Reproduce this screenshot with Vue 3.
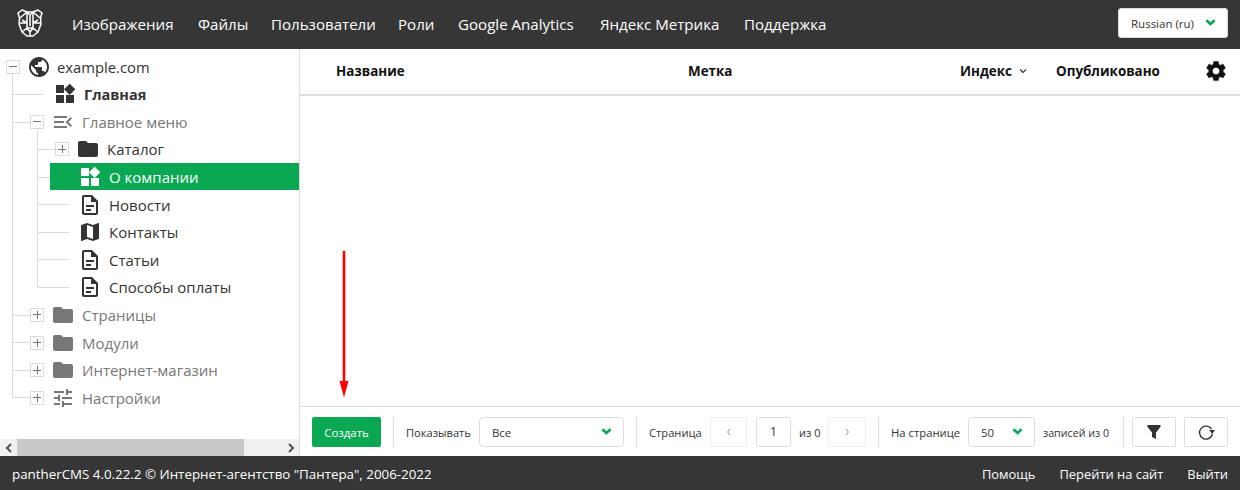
<script setup>
const icons = {
  widgets: 'M13 13v8h8v-8h-8zM3 21h8v-8H3v8zM3 3v8h8V3H3zm13.66-1.31L11 7.34 16.66 13l5.66-5.66-5.66-5.65z',
  globe: 'M12 2C6.48 2 2 6.48 2 12s4.48 10 10 10 10-4.48 10-10S17.52 2 12 2zm-1 17.93c-3.95-.49-7-3.85-7-7.93 0-.62.08-1.21.21-1.79L9 15v1c0 1.1.9 2 2 2v1.93zm6.9-2.54c-.26-.81-1-1.39-1.9-1.39h-1v-3c0-.55-.45-1-1-1H8v-2h2c.55 0 1-.45 1-1V7h2c1.1 0 2-.9 2-2v-.41c2.93 1.19 5 4.06 5 7.41 0 2.08-.8 3.97-2.1 5.39z',
  folder: 'M10 4H4c-1.1 0-1.99.9-1.99 2L2 18c0 1.1.9 2 2 2h16c1.1 0 2-.9 2-2V8c0-1.1-.9-2-2-2h-8l-2-2z',
  doc: 'M14 2H6c-1.1 0-2 .9-2 2v16c0 1.1.9 2 2 2h12c1.1 0 2-.9 2-2V8zm4 18H6V4h7v5h5zM8 12h8v2H8zm0 4h5v2H8z',
  map: 'M20.5 3l-.16.03L15 5.1 9 3 3.36 4.9c-.21.07-.36.25-.36.48V20.5c0 .28.22.5.5.5l.16-.03L9 18.9l6 2.1 5.64-1.9c.21-.07.36-.25.36-.48V3.5c0-.28-.22-.5-.5-.5zM15 19l-6-2.11V5l6 2.11V19z',
  menu: 'M3 18h13v-2H3v2zm0-5h10v-2H3v2zm0-7v2h13V6H3zm18 9.59L17.42 12 21 8.41 19.59 7l-5 5 5 5L21 15.59z',
  tune: 'M3 17v2h6v-2H3zM3 5v2h10V5H3zm10 16v-2h8v-2h-8v-2h-2v6h2zM7 9v2H3v2h4v2h2V9H7zm14 4v-2H11v2h10zm-6-4h2V7h4V5h-4V3h-2v6z',
  gear: 'M19.14 12.94c.04-.3.06-.61.06-.94 0-.32-.02-.64-.07-.94l2.03-1.58c.18-.14.23-.41.12-.61l-1.92-3.32c-.12-.22-.37-.29-.59-.22l-2.39.96c-.5-.38-1.03-.7-1.62-.94l-.36-2.54c-.04-.24-.24-.41-.48-.41h-3.84c-.24 0-.43.17-.47.41l-.36 2.54c-.59.24-1.13.57-1.62.94l-2.39-.96c-.22-.08-.47 0-.59.22L2.74 8.87c-.12.21-.08.47.12.61l2.03 1.58c-.05.3-.09.63-.09.94s.02.64.07.94l-2.03 1.58c-.18.14-.23.41-.12.61l1.92 3.32c.12.22.37.29.59.22l2.39-.96c.5.38 1.03.7 1.62.94l.36 2.54c.05.24.24.41.48.41h3.84c.24 0 .44-.17.47-.41l.36-2.54c.59-.24 1.13-.56 1.62-.94l2.39.96c.22.08.47 0 .59-.22l1.92-3.32c.12-.22.07-.47-.12-.61l-2.01-1.58zM12 15.6c-1.98 0-3.6-1.62-3.6-3.6s1.62-3.6 3.6-3.6 3.6 1.62 3.6 3.6-1.62 3.6-3.6 3.6z',
  filter: 'M4.200 3.600H19.800V6L14.400 12.600V20.400L9.600 18V12.600L4.200 6Z'
}
const menu = [
  { label: 'Изображения', w: 126 },
  { label: 'Файлы', w: 73 },
  { label: 'Пользователи', w: 127 },
  { label: 'Роли', w: 60 },
  { label: 'Google Analytics', w: 142 },
  { label: 'Яндекс Метрика', w: 144 },
  { label: 'Поддержка', w: 84 }
]
const children = [
  { icon: 'doc', label: 'Новости' },
  { icon: 'map', label: 'Контакты' },
  { icon: 'doc', label: 'Статьи' },
  { icon: 'doc', label: 'Способы оплаты' }
]
const sections = [
  { icon: 'folder', label: 'Страницы' },
  { icon: 'folder', label: 'Модули' },
  { icon: 'folder', label: 'Интернет-магазин' },
  { icon: 'tune', label: 'Настройки' }
]
</script>

<template>
  <div class="app">
    <header class="topbar">
      <svg class="logo" viewBox="0 0 26 28" fill="none" stroke="#fff" stroke-width="1.5" stroke-linejoin="round">
        <path d="M5 1 L10 3 H16 L21 1 L25 4 L23.5 9 L24 15 L21 23 L16 27 H10 L5 23 L2 15 L2.500 9 L1 4 Z" />
        <path d="M3 9 L10 3 V14 L5 11 M23 9 L16 3 V14 L21 11 M10 3 L13 6 L16 3 M13 6 V17 M2.500 14 L10 14 L10 19 L5 23 M23.500 14 L16 14 L16 19 L21 23 M10 19 H16 L13 23 Z M13 23 V27" />
      </svg>
      <nav class="nav">
        <span v-for="item in menu" :key="item.label" :style="{ width: item.w + 'px' }">{{ item.label }}</span>
      </nav>
      <div class="lang">
        <span>Russian (ru)</span>
        <svg class="chev" viewBox="0 0 12 8"><path d="M1.500 1 L6 5 L10.500 1" /></svg>
      </div>
    </header>

    <div class="body">
      <aside class="side">
        <div class="tree">
          <div class="row root">
            <span class="box minus"></span>
            <svg class="ic globe" viewBox="0 0 24 24"><path :d="icons.globe" /></svg>
            <span class="lbl">example.com</span>
          </div>
          <ul class="l1">
            <li class="row home">
              <svg class="ic" viewBox="0 0 24 24"><path :d="icons.widgets" /></svg>
              <span class="lbl strong">Главная</span>
            </li>
            <li>
              <div class="row sec">
                <span class="box minus"></span>
                <svg class="ic grey" viewBox="0 0 24 24"><path :d="icons.menu" /></svg>
                <span class="lbl grey">Главное меню</span>
              </div>
              <ul class="l2">
                <li class="row cat">
                  <span class="box plus"></span>
                  <svg class="ic" viewBox="0 0 24 24"><path :d="icons.folder" /></svg>
                  <span class="lbl">Каталог</span>
                </li>
                <li class="row active">
                  <svg class="ic white" viewBox="0 0 24 24"><path :d="icons.widgets" /></svg>
                  <span class="lbl">О компании</span>
                </li>
                <li v-for="c in children" :key="c.label" class="row leaf">
                  <svg class="ic" viewBox="0 0 24 24"><path :d="icons[c.icon]" /></svg>
                  <span class="lbl">{{ c.label }}</span>
                </li>
              </ul>
            </li>
            <li v-for="s in sections" :key="s.label" class="row sec">
              <span class="box plus"></span>
              <svg class="ic grey" viewBox="0 0 24 24"><path :d="icons[s.icon]" /></svg>
              <span class="lbl grey">{{ s.label }}</span>
            </li>
          </ul>
        </div>
        <div class="hscroll">
          <span class="arrow">
            <svg viewBox="0 0 8 10"><path d="M6 1 L2 5 L6 9" /></svg>
          </span>
          <span class="track"><span class="thumb"></span></span>
          <span class="arrow">
            <svg viewBox="0 0 8 10"><path d="M2 1 L6 5 L2 9" /></svg>
          </span>
        </div>
      </aside>

      <main class="main">
        <div class="thead">
          <span class="th t-name">Название</span>
          <span class="th t-mark">Метка</span>
          <span class="th t-index">Индекс
            <svg class="small-chev" viewBox="0 0 8 6"><path d="M1 1.500 L4 4.500 L7 1.500" /></svg>
          </span>
          <span class="th t-pub">Опубликовано</span>
          <svg class="gear" viewBox="0 0 24 24"><path :d="icons.gear" /></svg>
        </div>
        <div class="tbody"></div>
        <div class="pager">
          <button class="create">Создать</button>
          <span class="div"></span>
          <span class="cap show">Показывать</span>
          <div class="select s-all">
            <span>Все</span>
            <svg class="chev" viewBox="0 0 12 8"><path d="M1.500 1 L6 5 L10.500 1" /></svg>
          </div>
          <span class="div"></span>
          <span class="cap c-page">Страница</span>
          <span class="pg">
            <svg viewBox="0 0 6 8"><path d="M4 1 L1.500 4 L4 7" /></svg>
          </span>
          <span class="pg num">1</span>
          <span class="cap c-of">из 0</span>
          <span class="pg next">
            <svg viewBox="0 0 6 8"><path d="M2 1 L4.500 4 L2 7" /></svg>
          </span>
          <span class="div"></span>
          <span class="cap c-per">На странице</span>
          <div class="select s-num">
            <span>50</span>
            <svg class="chev" viewBox="0 0 12 8"><path d="M1.500 1 L6 5 L10.500 1" /></svg>
          </div>
          <span class="cap narrow">записей из 0</span>
          <span class="div"></span>
          <span class="tool"><svg viewBox="0 0 24 24"><path :d="icons.filter" /></svg></span>
          <span class="tool">
            <svg viewBox="0 0 20 20">
              <path class="ring" d="M16.400 12 A6.500 6.500 0 1 1 15.600 7.200" />
              <path d="M13.200 8 H19 L16.100 12 Z" />
            </svg>
          </span>
        </div>
        <svg class="red-arrow" viewBox="0 0 12 148" fill="#f00">
          <rect x="4.700" y="0" width="2.600" height="132" />
          <path d="M1.500 130 H10.500 L6 146.500 Z" />
        </svg>
      </main>
    </div>

    <footer class="footer">
      <span class="copy">pantherCMS 4.0.22.2 © Интернет-агентство "Пантера", 2006-2022</span>
      <nav class="foot-nav">
        <span>Помощь</span>
        <span>Перейти на сайт</span>
        <span>Выйти</span>
      </nav>
    </footer>
  </div>
</template>

<style>
html, body { margin: 0; padding: 0; background: #fff; overflow: hidden; }
</style>

<style scoped>
.app {
  width: 1240px;
  height: 490px;
  display: flex;
  flex-direction: column;
  font-family: "Open Sans", "Liberation Sans", sans-serif;
  color: #333;
  overflow: hidden;
}

/* top bar */
.topbar {
  height: 49px;
  flex: none;
  background: #363636;
  display: flex;
  align-items: center;
  padding: 0 12px 0 17px;
  box-sizing: border-box;
}
.logo { width: 26px; height: 28px; flex: none; margin-bottom: 3px; }
.nav {
  display: flex;
  margin-left: 29px;
  margin-bottom: 2px;
  color: #fff;
  font-size: 15.100px;
  white-space: nowrap;
}
.lang {
  margin-left: auto;
  width: 110px;
  height: 30px;
  margin-bottom: 3px;
  box-sizing: border-box;
  background: #fff;
  border-radius: 3px;
  border: 1px solid #ddd;
  display: flex;
  align-items: center;
  justify-content: space-between;
  padding: 0 11px 0 12px;
  font-size: 11.500px;
  color: #333;
}
.chev { width: 11px; height: 8px; fill: none; stroke: #0aa853; stroke-width: 3; flex: none; }

/* layout */
.body { flex: 1; display: flex; min-height: 0; }
.side {
  width: 300px;
  flex: none;
  box-sizing: border-box;
  border-right: 1px solid #ddd;
  display: flex;
  flex-direction: column;
}
.tree { flex: 1; padding-top: 3.950px; overflow: hidden; font-size: 15px; }
ul { list-style: none; margin: 0; padding: 0; position: relative; }

.row {
  height: 27.580px;
  display: flex;
  align-items: center;
  position: relative;
  white-space: nowrap;
}
.box {
  width: 14px;
  height: 14px;
  flex: none;
  box-sizing: border-box;
  border: 1px solid #d9d9d9;
  background: #fff;
  position: relative;
  z-index: 1;
}
.box::before {
  content: "";
  position: absolute;
  left: 2px; right: 2px; top: 5.500px;
  height: 1px;
  background: #777;
}
.box.plus::after {
  content: "";
  position: absolute;
  top: 2px; bottom: 2px; left: 5.500px;
  width: 1px;
  background: #777;
}
.ic { flex: none; width: 24px; height: 24px; fill: #333; }
.ic.grey { fill: #777; }
.ic.white { fill: #fff; }
.lbl { color: #333; }
.lbl.grey { color: #777; }
.lbl.strong { font-weight: 700; font-size: 14.500px; }

.root { padding-left: 6px; }
.root .globe { margin-left: 7px; }
.root .lbl { margin-left: 6px; font-size: 14.800px; }

.l1 { margin-left: 12px; }
.l1::before {
  content: "";
  position: absolute;
  left: 0; top: -8px; bottom: 13.800px;
  width: 1px;
  background: #d9d9d9;
}
.l1 > li { position: relative; }
.l1 > .row::before, .l1 > li > .row::before, .l2 > .row::before {
  content: "";
  position: absolute;
  left: 0; top: 13.500px;
  height: 1px;
  background: #d9d9d9;
  width: 18px;
}
.l1 > .home::before { width: 32px; }
.home { padding-left: 41px; }
.home .lbl { margin-left: 7px; }
.sec { padding-left: 18px; }
.sec .ic { margin-left: 7px; }
.sec .lbl { margin-left: 7px; }

.l2 { margin-left: 25px; }
.l2::before {
  content: "";
  position: absolute;
  left: 0; top: -6px; bottom: 13.800px;
  width: 1px;
  background: #d9d9d9;
}
.cat { padding-left: 18px; }
.cat .ic { margin-left: 7px; }
.cat .lbl { margin-left: 7px; }
.l2 > .active {
  background: #0aa853;
  height: 27px;
  margin: 0 0 0.580px 13px;
  padding-left: 28px;
}
.l2 > .active::before { left: -13px; width: 13px; }
.active .lbl { color: #fff; margin-left: 7px; }
.leaf { padding-left: 41px; }
.l2 > .leaf::before { width: 32px; }
.leaf .lbl { margin-left: 7px; }

.hscroll {
  height: 17px;
  flex: none;
  display: flex;
  background: #f1f1f1;
}
.arrow {
  width: 17px;
  flex: none;
  display: flex;
  align-items: center;
  justify-content: center;
}
.arrow svg { width: 8px; height: 10px; fill: none; stroke: #505050; stroke-width: 2; }
.track { flex: 1; display: block; }
.thumb { display: block; width: 227px; height: 100%; background: #c8c8c8; }

/* main */
.main { flex: 1; display: flex; flex-direction: column; position: relative; min-width: 0; }
.thead {
  height: 47px;
  flex: none;
  box-sizing: border-box;
  border-bottom: 2px solid #ddd;
  padding-bottom: 2px;
  display: flex;
  align-items: center;
  font-size: 13.400px;
  font-weight: 700;
  color: #111;
  padding-left: 36px;
}
.th { white-space: nowrap; }
.t-name { width: 352px; }
.t-mark { width: 272px; }
.t-index { width: 96px; display: flex; align-items: center; gap: 7px; }
.small-chev { width: 8px; height: 6px; fill: none; stroke: #333; stroke-width: 1.200; }
.t-pub { width: 150px; margin-right: -2px; }
.gear { width: 24px; height: 24px; fill: #111; stroke: #111; stroke-width: 0.500; flex: none; }
.tbody { flex: 1; }

.pager {
  height: 50px;
  flex: none;
  box-sizing: border-box;
  border-top: 1px solid #ddd;
  display: flex;
  align-items: center;
  padding-left: 12px;
  font-size: 11.400px;
  color: #333;
  white-space: nowrap;
}
.create {
  width: 69px;
  height: 30px;
  flex: none;
  border: 0;
  border-radius: 2px;
  background: #0aa853;
  color: #fff;
  font: inherit;
  padding: 2px 0 0;
}
.div { width: 1px; height: 30px; background: #ddd; flex: none; margin: 0 12px; }
.cap { flex: none; padding-top: 2px; }
.cap.show { width: 65px; font-size: 11.100px; }
.cap.c-page { width: 53px; font-size: 11.200px; }
.cap.c-of { width: 21px; font-size: 11px; }
.cap.c-per { width: 69px; font-size: 11.300px; }
.cap.narrow { width: 68px; font-size: 10.700px; }
.select {
  height: 30px;
  box-sizing: border-box;
  border: 1px solid #ddd;
  border-radius: 4px;
  display: flex;
  align-items: center;
  justify-content: space-between;
  padding: 0 11px 0 12px;
  flex: none;
}
.select > span { padding-top: 2px; }
.s-all { width: 145px; margin-left: 8px; }
.s-num { width: 67px; margin: 0 8px; }
.pg {
  height: 30px;
  width: 37px;
  box-sizing: border-box;
  border: 1px solid #eee;
  border-radius: 2px;
  display: flex;
  align-items: center;
  justify-content: center;
  margin: 0 8px;
  flex: none;
}
.pg svg { width: 6px; height: 8px; fill: none; stroke: #888; stroke-width: 0.900; }
.pg.num { width: 35px; border-color: #ddd; font-size: 12px; margin-left: 1px; }
.pg.next { width: 38px; margin-right: 0; }
.tool {
  width: 44px;
  height: 30px;
  box-sizing: border-box;
  border: 1px solid #ddd;
  border-radius: 2px;
  display: flex;
  align-items: center;
  justify-content: center;
  margin-right: 8px;
  flex: none;
}
.div + .tool { margin-left: -4px; }
.tool svg { width: 20px; height: 20px; fill: #333; }
.tool svg .ring { fill: none; stroke: #333; stroke-width: 1.400; }
.red-arrow {
  position: absolute;
  left: 38px;
  top: 202px;
  width: 12px;
  height: 148px;
}

/* footer */
.footer {
  height: 34px;
  flex: none;
  box-sizing: border-box;
  padding: 2px 12px 0;
  background: #363636;
  color: #fff;
  display: flex;
  align-items: center;
  justify-content: space-between;
  font-size: 12.900px;
  white-space: nowrap;
}
.copy { font-size: 13.350px; }
.foot-nav { display: flex; gap: 24px; }
</style>
